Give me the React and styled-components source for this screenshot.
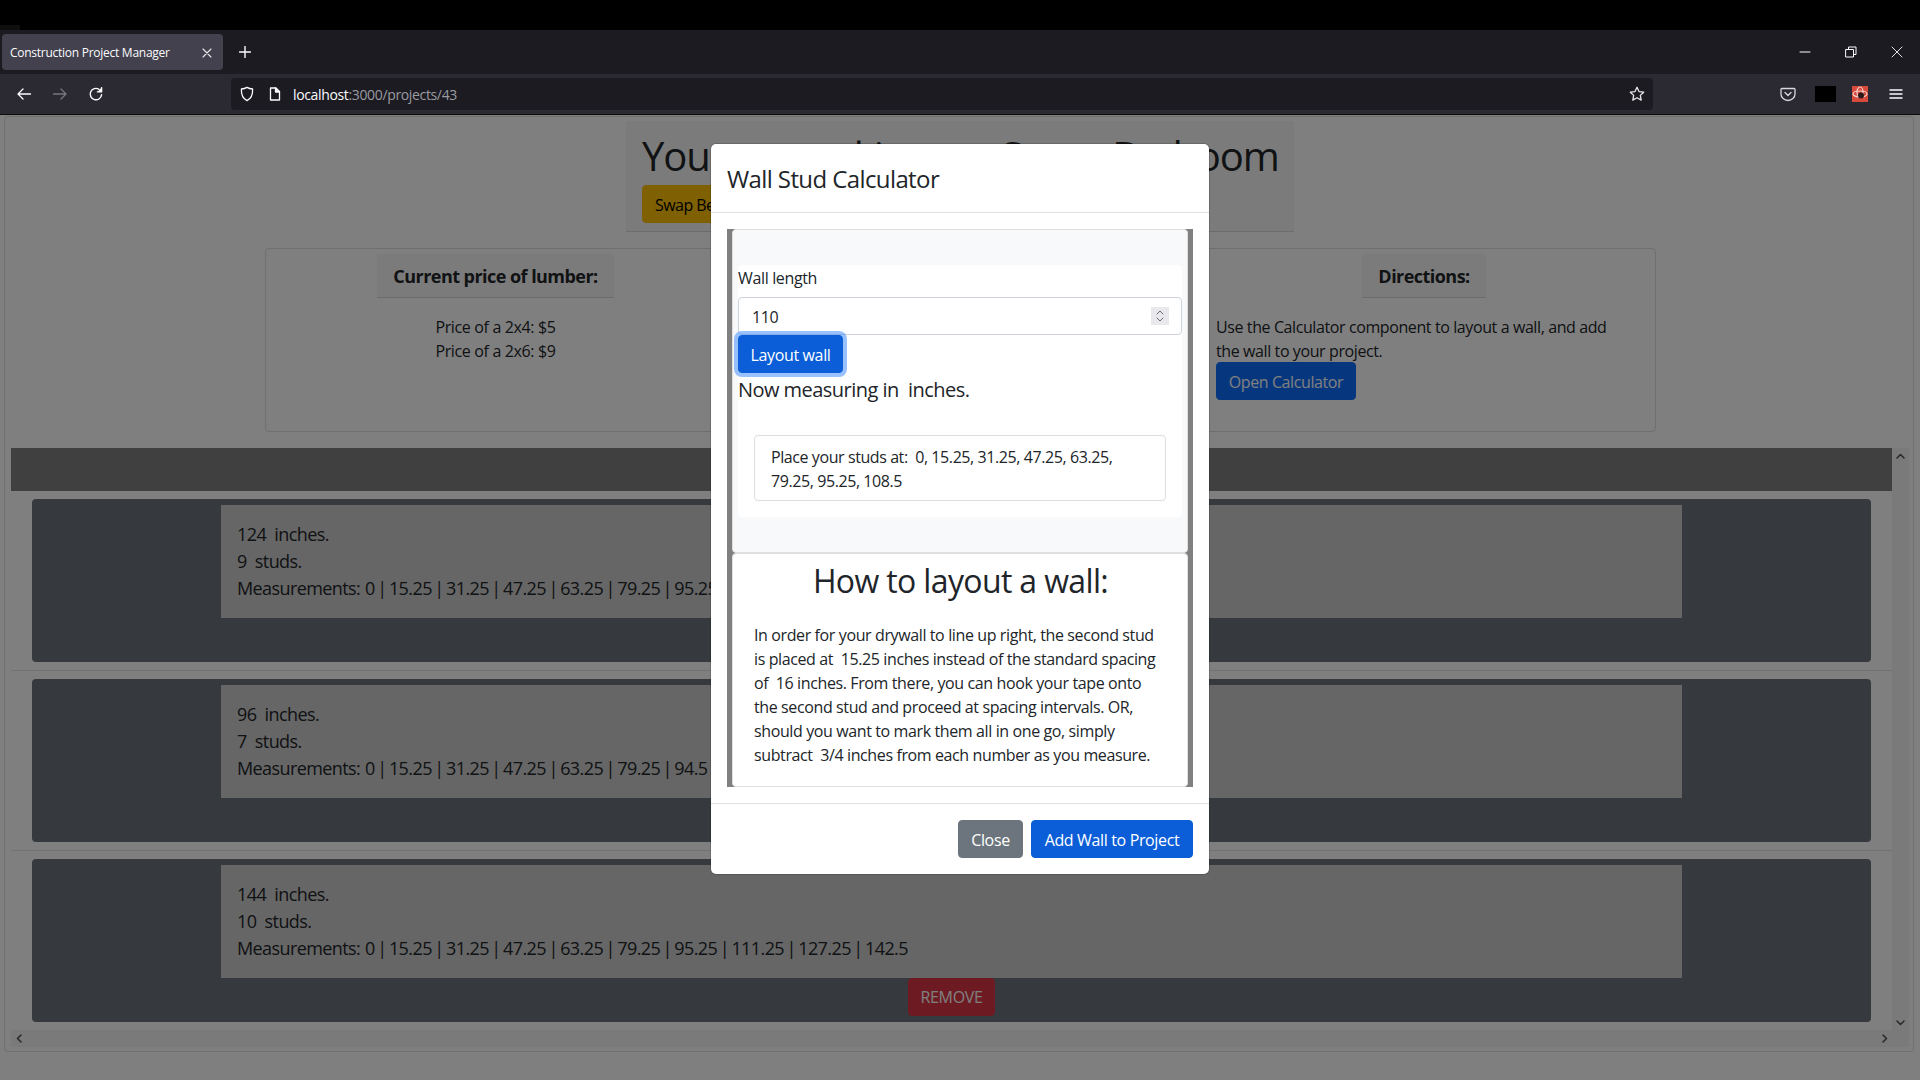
import React from "react";
import styled, { createGlobalStyle } from "styled-components";

const Global = createGlobalStyle`
  html, body { margin: 0; padding: 0; background: #000; }
  * { box-sizing: border-box; }
  body { font-family: "Open Sans", "Noto Sans", sans-serif; font-size: 16px; line-height: 24px; color: #212529; letter-spacing: -0.022em; }
`;

const Screen = styled.div`
  width: 1920px; height: 1080px; display: flex; flex-direction: column; overflow: hidden; background: #000;
`;
const TopStrip = styled.div`
  height: 30px; background: #000; display: flex; align-items: flex-end;
`;
const TopMark = styled.div`
  width: 20px; height: 5px; background: #0f0f0f;
`;
const TabBar = styled.div`
  height: 44px; background: #1c1b22; display: flex; align-items: center; padding-left: 2px; color: #fbfbfe;
`;
const Tab = styled.div`
  width: 221px; height: 36px; background: #42414d; border-radius: 4px; display: flex; align-items: center;
  justify-content: space-between; padding: 2px 11px 0 8px; font-size: 12px; letter-spacing: -0.022em;
`;
const NewTab = styled.div`
  width: 44px; height: 36px; display: flex; align-items: center; justify-content: center;
`;
const WindowControls = styled.div`
  margin-left: auto; display: flex; align-items: center;
`;
const WinButton = styled.div`
  width: 46px; height: 44px; display: flex; align-items: center; justify-content: center;
`;
const Toolbar = styled.div`
  height: 41px; background: #2b2a33; border-bottom: 1px solid #0c0c0d; display: flex; align-items: center; padding: 0 3px 0 6px; color: #fbfbfe;
`;
const NavButton = styled.div`
  width: 36px; height: 32px; display: flex; align-items: center; justify-content: center;
`;
const NavGroup = styled.div`
  display: flex;
`;
const UrlBar = styled.div`
  width: 1422px; height: 32px; margin-left: 117px; background: #1c1b22; border-radius: 4px;
  display: flex; align-items: center; font-size: 14px; padding: 0 8px;
`;
const UrlIcons = styled.div`
  display: flex; align-items: center; gap: 12px; margin-right: 10px;
`;
const UrlText = styled.span`
  padding-top: 1px;
`;
const UrlHost = styled.span`
  color: #fbfbfe;
`;
const UrlRest = styled.span`
  color: #9a9aa0;
`;
const Star = styled.div`
  margin-left: auto; display: flex;
`;
const ExtIcons = styled.div`
  display: flex; align-items: center; margin-left: 117px;
`;
const ExtSlot = styled.div`
  width: ${p => p.$w}px; display: flex; justify-content: center; align-items: center;
`;
const BlackBox = styled.div`
  width: 21px; height: 16px; background: #000;
`;

const Viewport = styled.div`
  flex: 1; position: relative; background: #fff; padding: 1px 6px 0 4px;
`;
const Backdrop = styled.div`
  position: absolute; inset: 0; background: rgba(0,0,0,.5);
`;
const PageCard = styled.div`
  height: 936px; border: 1px solid rgba(0,0,0,.125); border-radius: 4px; display: flex; flex-direction: column; padding: 4px 4px 4px 6px;
`;
const Hero = styled.div`
  width: 668px; height: 111px; margin: 0 auto; padding: 11px 16px 0; background: rgba(0,0,0,.03); border-bottom: 1px solid rgba(0,0,0,.125);
`;
const HeroTitle = styled.h1`
  margin: 0; font-size: 40px; line-height: 48px; font-weight: 400; white-space: nowrap; letter-spacing: -0.028em;
`;
const Button = styled.button`
  height: 38px; width: ${p => (p.$w ? `${p.$w}px` : "auto")}; border: 1px solid ${p => p.$bg}; background: ${p => p.$bg}; color: ${p => p.$fg || "#fff"};
  border-radius: 4px; font: inherit; letter-spacing: inherit; padding: ${p => (p.$w ? "2px 0 0" : "2px 12px 0")}; white-space: nowrap;
  display: inline-flex; align-items: center; justify-content: center;
`;
const HeroButton = styled(Button)`
  margin-top: 5px; letter-spacing: -0.035em;
`;
const OpenButton = styled(Button)`
  display: flex; margin-top: -1px;
`;
const RemoveButton = styled(Button)`
  padding-top: 0;
`;
const InfoCard = styled.div`
  width: 1391px; height: 185px; margin: 16px 0 16px 254px; border: 1px solid rgba(0,0,0,.125); border-radius: 4px;
  display: grid; grid-template-columns: 459px 1fr 462px; padding-top: 5px;
`;
const InfoCol = styled.div`
  display: flex; flex-direction: column; align-items: center;
`;
const ColHeader = styled.div`
  height: 44px; padding: 2px 16px 0; display: flex; align-items: center; font-size: 18px; font-weight: 700; letter-spacing: -0.03em;
  background: rgba(0,0,0,.03); border-bottom: 1px solid rgba(0,0,0,.125);
`;
const Prices = styled.div`
  margin-top: 17px; text-align: center;
`;
const Directions = styled.div`
  margin-top: 17px; padding: 0 23px; align-self: stretch; letter-spacing: -0.025em;
`;
const WallsArea = styled.div`
  flex: 1; display: grid; grid-template-columns: 1fr 17px; grid-template-rows: 582px 17px;
`;
const WallList = styled.div`
  display: flex; flex-direction: column;
`;
const ListHeader = styled.div`
  height: 43px; background: #808080; margin-bottom: 8px;
`;
const WallCard = styled.div`
  height: 163px; margin: 0 21px; padding: 6px; background: #6c757d; border-radius: 4px; display: flex; flex-direction: column; align-items: center;
`;
const WallDivider = styled.div`
  height: 1px; margin: 8px 0; background: rgba(0,0,0,.1);
`;
const WallInfo = styled.div`
  width: 1461px; height: 113px; padding: 16px; background: #ccc; font-size: 18px; line-height: 27px; flex: none; white-space: nowrap;
  letter-spacing: -0.033em;
`;
const Measures = styled.span`
  word-spacing: -1.65px;
`;
const Track = styled.div`
  background: #f5f5f5; display: flex; align-items: center; justify-content: space-between; flex-direction: ${p => p.$dir}; padding: ${p => p.$pad};
`;
const Corner = styled.div`
  background: #f5f5f5;
`;

const Modal = styled.div`
  position: absolute; left: 711px; top: 29px; width: 498px; background: #fff; border-radius: 5px; display: flex; flex-direction: column;
  box-shadow: 0 0 0 1px rgba(0,0,0,.15);
`;
const ModalHeader = styled.div`
  height: 69px; padding: 2px 16px 0; border-bottom: 1px solid #dee2e6; display: flex; align-items: center;
`;
const ModalTitle = styled.h4`
  margin: 0; font-size: 24px; font-weight: 400; line-height: 36px; letter-spacing: -0.025em;
`;
const ModalBody = styled.div`
  padding: 16px;
`;
const Frame = styled.div`
  height: 558px; background: #808080; padding: 0 5px; display: flex; flex-direction: column;
`;
const CalcSection = styled.div`
  height: 324px; background: #f8f9fa; border: 1px solid #dfdfdf; border-radius: 4px; padding: 35px 5px 0;
`;
const CalcForm = styled.div`
  height: 252px; background: #fff; border-radius: 4px;
`;
const Label = styled.div`
  margin-bottom: 6px; line-height: 26px;
`;
const NumberField = styled.div`
  height: 38px; border: 1px solid #ced4da; border-radius: 4px; display: flex; align-items: center; justify-content: space-between; padding: 0 12px 0 13px;
`;
const FieldValue = styled.span`
  padding-top: 2px;
`;
const Spinner = styled.div`
  width: 18px; height: 18px; background: #e9e9ed; display: flex; align-items: center; justify-content: center;
`;
const FocusButton = styled(Button)`
  box-shadow: 0 0 0 4px rgba(49,132,253,.5); position: relative;
`;
const Measuring = styled.div`
  margin-top: 2px; font-size: 20px; line-height: 30px; letter-spacing: -0.027em;
`;
const Result = styled.div`
  height: 66px; margin: 30px 16px 0; border: 1px solid #dedede; border-radius: 4px; padding: 9px 16px; letter-spacing: -0.026em;
`;
const HowSection = styled.div`
  flex: 1; background: #fff; border: 1px solid #dfdfdf; border-radius: 4px; padding: 8px 20px 0 21px;
`;
const HowTitle = styled.h2`
  margin: 0 0 23px; font-size: 32px; font-weight: 400; line-height: 38px; text-align: center; letter-spacing: -0.02em;
`;
const HowText = styled.p`
  margin: 0; letter-spacing: -0.024em;
`;
const ModalFooter = styled.div`
  height: 71px; border-top: 1px solid #dee2e6; padding: 16px; display: flex; justify-content: flex-end; gap: 8px;
`;

const Sv = ({ w = 16, h = 16, c = "#fbfbfe", sw = 1.4, children }) => (
  <svg width={w} height={h} viewBox={`0 0 ${w} ${h}`} fill="none" stroke={c} strokeWidth={sw} strokeLinecap="round" strokeLinejoin="round">{children}</svg>
);

const walls = [
  { len: 124, studs: 9, m: "0 | 15.25 | 31.25 | 47.25 | 63.25 | 79.25 | 95.25 | 111.25 | 123" },
  { len: 96, studs: 7, m: "0 | 15.25 | 31.25 | 47.25 | 63.25 | 79.25 | 94.5" },
  { len: 144, studs: 10, m: "0 | 15.25 | 31.25 | 47.25 | 63.25 | 79.25 | 95.25 | 111.25 | 127.25 | 142.5" },
];

export default function App() {
  return (
    <Screen>
      <Global />
      <TopStrip><TopMark /></TopStrip>
      <TabBar>
        <Tab>
          <span>Construction Project Manager</span>
          <Sv w={10} h={10} sw={1.1} c="#e8e8ea"><path d="M1 1l8 8M9 1l-8 8" /></Sv>
        </Tab>
        <NewTab><Sv w={12} h={12} sw={1.4}><path d="M6 .5v11M.5 6h11" /></Sv></NewTab>
        <WindowControls>
          <WinButton><Sv w={12} h={12} sw={1}><path d="M1 6h10" /></Sv></WinButton>
          <WinButton><Sv w={12} h={12} sw={1}><path d="M1 3.5h7.5v7.5H1zM3.5 3.5V1H11v7.5H8.5" /></Sv></WinButton>
          <WinButton><Sv w={12} h={12} sw={.9}><path d="M1 1l10 10M11 1L1 11" /></Sv></WinButton>
        </WindowControls>
      </TabBar>
      <Toolbar>
        <NavGroup>
          <NavButton><Sv sw={1.3}><path d="M14.5 8H2M7 3L2 8l5 5" /></Sv></NavButton>
          <NavButton><Sv sw={1.3} c="#77767c"><path d="M1.5 8H14M9 3l5 5-5 5" /></Sv></NavButton>
          <NavButton><Sv sw={1.4}><path d="M13.6 8.6A5.7 5.7 0 1 1 11 3.3" /><path d="M13.6 1.6v4.3H9.4" fill="#fbfbfe" /></Sv></NavButton>
        </NavGroup>
        <UrlBar>
          <UrlIcons>
            <Sv sw={1.3}><path d="M8 1.4c1.8 1.1 3.4 1.5 5.6 1.6.3 5.6-1.5 9.6-5.6 11.6C3.9 12.6 2.1 8.6 2.4 3 4.6 2.9 6.2 2.5 8 1.4z" /></Sv>
            <Sv sw={1.3}><path d="M3.5 2h5.5l3.5 3.5V14h-9z" /><path d="M8.5 2v4h4" fill="#fbfbfe" /></Sv>
          </UrlIcons>
          <UrlText><UrlHost>localhost</UrlHost><UrlRest>:3000/projects/43</UrlRest></UrlText>
          <Star><Sv sw={1.3} c="#e8e8ea"><path d="M8 1.3l2 4.3 4.7.6-3.4 3.2.9 4.7L8 11.8l-4.2 2.3.9-4.7L1.3 6.2 6 5.6z" /></Sv></Star>
        </UrlBar>
        <ExtIcons>
          <ExtSlot $w={36}><Sv sw={1.3} c="#d8d8dc"><path d="M2 2.5h12a1 1 0 0 1 1 1V8a7 6.5 0 0 1-14 0V3.5a1 1 0 0 1 1-1z" /><path d="M5 6.5l3 3 3-3" /></Sv></ExtSlot>
          <ExtSlot $w={39}><BlackBox /></ExtSlot>
          <ExtSlot $w={30}>
            <svg width="16" height="16" viewBox="0 0 16 16">
              <rect width="16" height="16" fill="#d74a3c" />
              <ellipse cx="8" cy="8" rx="7" ry="3" fill="none" stroke="#f4d4cf" strokeWidth="1.2" />
              <ellipse cx="8" cy="6" rx="3" ry="5" fill="none" stroke="#f4d4cf" strokeWidth="1.2" />
              <circle cx="9" cy="9.5" r="3" fill="#2b1a1a" />
            </svg>
          </ExtSlot>
          <ExtSlot $w={42}><Sv w={14} h={12} sw={1.4}><path d="M1 2h12M1 6h12M1 10h12" /></Sv></ExtSlot>
        </ExtIcons>
      </Toolbar>
      <Viewport>
        <PageCard>
          <Hero>
            <HeroTitle>You are working on: Spare Bedroom</HeroTitle>
            <HeroButton $bg="#ffc107" $fg="#000">Swap Bedroom</HeroButton>
          </Hero>
          <InfoCard>
            <InfoCol>
              <ColHeader>Current price of lumber:</ColHeader>
              <Prices>Price of a 2x4: $5<br />Price of a 2x6: $9</Prices>
            </InfoCol>
            <InfoCol />
            <InfoCol>
              <ColHeader>Directions:</ColHeader>
              <Directions>
                Use the Calculator component to layout a wall, and add the wall to your project.
                <OpenButton $bg="#0d6efd" $w={140}>Open Calculator</OpenButton>
              </Directions>
            </InfoCol>
          </InfoCard>
          <WallsArea>
            <WallList>
              <ListHeader />
              {walls.map((w, i) => (
                <React.Fragment key={w.len}>
                  {i > 0 && <WallDivider />}
                  <WallCard>
                    <WallInfo>
                      {w.len}&nbsp; inches.<br />
                      {w.studs}&nbsp; studs.<br />
                      <Measures>Measurements:&nbsp; {w.m}</Measures>
                    </WallInfo>
                    <RemoveButton $bg="#dc3545">REMOVE</RemoveButton>
                  </WallCard>
                </React.Fragment>
              ))}
            </WallList>
            <Track $dir="column" $pad="5px 0 4px">
              <Sv w={9} h={6} sw={1.6} c="#555"><path d="M1 5l3.5-3.5L8 5" /></Sv>
              <Sv w={9} h={6} sw={1.6} c="#555"><path d="M1 1l3.5 3.5L8 1" /></Sv>
            </Track>
            <Track $dir="row" $pad="0 4px 0 5px">
              <Sv w={6} h={9} sw={1.6} c="#555"><path d="M5 1L1.5 4.5 5 8" /></Sv>
              <Sv w={6} h={9} sw={1.6} c="#555"><path d="M1 1l3.5 3.5L1 8" /></Sv>
            </Track>
            <Corner />
          </WallsArea>
        </PageCard>
        <Backdrop />
        <Modal>
          <ModalHeader><ModalTitle>Wall Stud Calculator</ModalTitle></ModalHeader>
          <ModalBody>
            <Frame>
              <CalcSection>
                <CalcForm>
                  <Label>Wall length</Label>
                  <NumberField>
                    <FieldValue>110</FieldValue>
                    <Spinner>
                      <Sv w={10} h={14} sw={1} c="#6a6a70"><path d="M2 5l3-3 3 3M2 9l3 3 3-3" /></Sv>
                    </Spinner>
                  </NumberField>
                  <FocusButton $bg="#0b5ed7" $w={105}>Layout wall</FocusButton>
                  <Measuring>Now measuring in&nbsp; inches.</Measuring>
                  <Result>Place your studs at:&nbsp; 0, 15.25, 31.25, 47.25, 63.25, 79.25, 95.25, 108.5</Result>
                </CalcForm>
              </CalcSection>
              <HowSection>
                <HowTitle>How to layout a wall:</HowTitle>
                <HowText>
                  In order for your drywall to line up right, the second stud is placed at&nbsp; 15.25 inches instead of the standard spacing of&nbsp; 16 inches. From there, you can hook your tape onto the second stud and proceed at spacing intervals. OR, should you want to mark them all in one go, simply subtract&nbsp; 3/4 inches from each number as you measure.
                </HowText>
              </HowSection>
            </Frame>
          </ModalBody>
          <ModalFooter>
            <Button $bg="#6c757d" $w={65}>Close</Button>
            <Button $bg="#0b5ed7" $w={162}>Add Wall to Project</Button>
          </ModalFooter>
        </Modal>
      </Viewport>
    </Screen>
  );
}
